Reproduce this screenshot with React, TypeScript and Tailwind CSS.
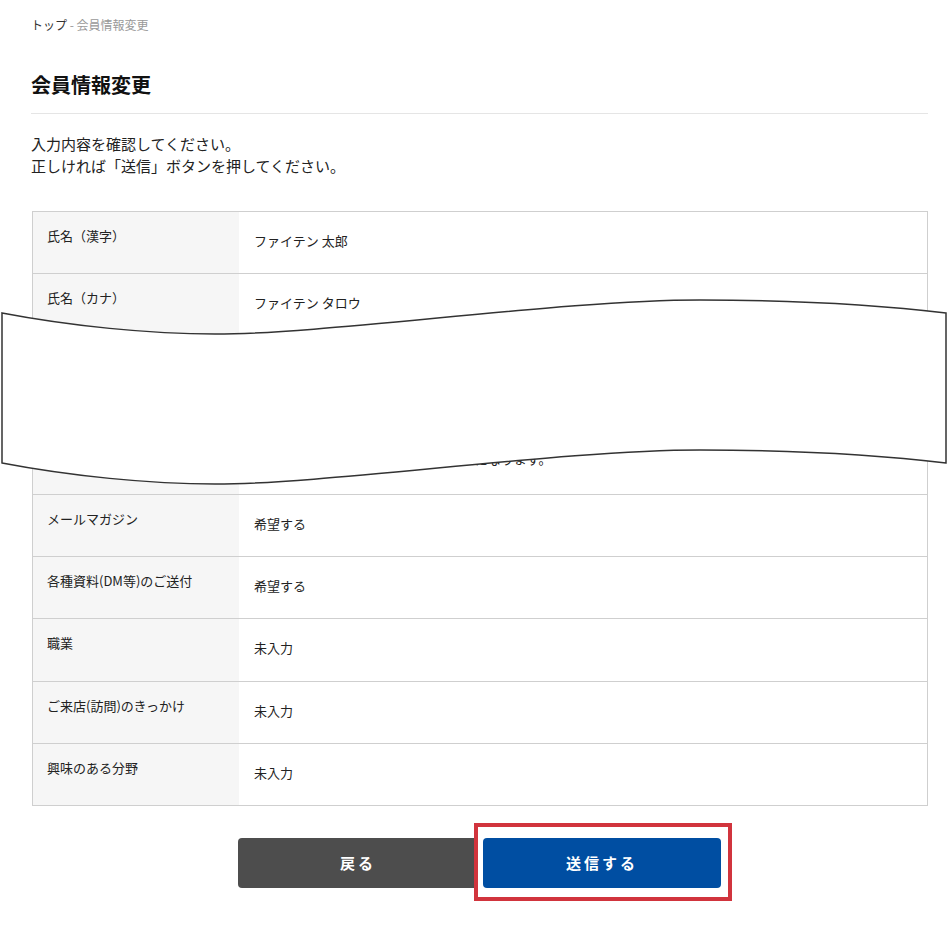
import React from "react";

const font = { fontFamily: '"Noto Sans CJK JP", "Noto Sans", sans-serif' };

type Row = { label: string; value: React.ReactNode; h?: string; vc?: string };

const rows: Row[] = [
  { label: "氏名（漢字）", value: "ファイテン 太郎" },
  { label: "氏名（カナ）", value: "ファイテン タロウ" },
  { label: "メールアドレス", value: "phiten@example.com" },
  {
    label: "パスワード",
    value: (
      <>
        <div>********</div>
        <div>※パスワードはログインの際に必要です。</div>
        <div>※ログインIDは新しいメールアドレスになります。</div>
      </>
    ),
    h: "h-[97px]",
    vc: "pt-[15px] leading-[18.5px]",
  },
  { label: "メールマガジン", value: "希望する" },
  { label: "各種資料(DM等)のご送付", value: "希望する" },
  { label: "職業", value: "未入力", h: "h-[63px]" },
  { label: "ご来店(訪問)のきっかけ", value: "未入力" },
  { label: "興味のある分野", value: "未入力" },
];

export default function App() {
  return (
    <div className="relative w-full min-h-[945px] bg-white text-[#222]" style={font}>
      <div className="pl-[31px] pr-[20px] pt-[16px]">
        <div className="text-[12px] leading-[18px] text-[#999]">
          <span className="text-[#333]">トップ</span> - 会員情報変更
        </div>
        <h1 className="mt-[36px] text-[20px] leading-[30px] font-bold text-[#111] pb-[13px] border-b border-[#e5e5e5]">
          会員情報変更
        </h1>
        <div className="mt-[19px] text-[15px] leading-[22px] text-[#222]">
          <p>入力内容を確認してください。</p>
          <p>正しければ「送信」ボタンを押してください。</p>
        </div>

        <div className="mt-[34px] ml-[1px] border border-[#cfcfcf] border-b-0">
          {rows.map((r, i) => (
            <div key={i} className={`flex border-b border-[#cfcfcf] ${r.h ?? "h-[62px]"}`}>
              <div className="w-[206px] shrink-0 bg-[#f6f6f6] pl-[14px] pt-[14px] text-[13px] leading-[20px] text-[#222]">
                {r.label}
              </div>
              <div className={`flex-1 pl-[15px] text-[13px] text-[#222] ${r.vc ?? "pt-[19px] leading-[20px]"}`}>
                {r.value}
              </div>
            </div>
          ))}
        </div>

        <div className="mt-[32px] flex justify-center gap-[5px]">
          <button className="w-[240px] h-[50px] rounded-[4px] bg-[#4d4d4d] text-white text-[15px] font-bold tracking-[3px]">
            戻る
          </button>
          <div className="relative">
            <button className="w-[238px] h-[50px] rounded-[4px] bg-[#004ea2] text-white text-[15px] font-bold tracking-[3px]">
              送信する
            </button>
            <span className="absolute -left-[9px] -top-[15px] w-[258px] h-[78px] border-4 border-[#d1343d] pointer-events-none" />
          </div>
        </div>
      </div>

      <svg
        className="absolute top-0 left-0 pointer-events-none"
        width="948"
        height="945"
        viewBox="0 0 948 945"
      >
        <path
          d="M2 313 C 70 326 150 334 215 334 C 330 334 560 300 700 300 C 800 300 880 305 946 313 L 946 463 C 880 455 800 450 700 450 C 560 450 330 484 215 484 C 150 484 70 476 2 463 Z"
          fill="#fff"
          stroke="#333"
          strokeWidth="1.5"
        />
      </svg>
    </div>
  );
}
